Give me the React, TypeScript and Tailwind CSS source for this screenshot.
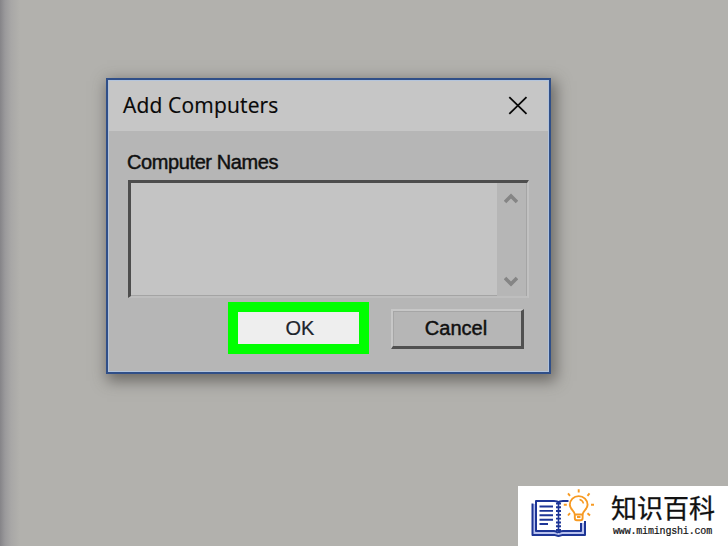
import type { ReactNode } from 'react';

const Chevron = ({ down = false }: { down?: boolean }) => (
  <svg viewBox="0 0 14 11" width="14" height="11" fill="none" stroke="#858585" strokeWidth={3.6}>
    <path d={down ? 'M1 2l6 6 6-6' : 'M1 9l6-6 6 6'} />
  </svg>
);

const CloseIcon = () => (
  <svg viewBox="0 0 20 20" width="20" height="20" fill="none" stroke="#080808" strokeWidth={1.8}>
    <path d="M1.3 1.2l17.2 16.6M18.5 1.2L1.3 17.8" />
  </svg>
);

const BookLogo = () => (
  <svg viewBox="0 0 66 52" width="66" height="52" fill="none" strokeLinejoin="round">
    <path d="M2.500 15H6v27h18l4.500 1.500L33 42h18v-8h4v12H2.500z" fill="#b9c2ee" />
    <g stroke="#1d3596" strokeWidth={2}>
      <path d="M28 44c-1-1.500-2-2-4-2H6V12h18c2.500 0 4 .7 4.500 1.500 .5-.8 2-1.500 4.500-1.500h5.500" />
      <path d="M2.500 14.500V46h22c1.500 0 2 1 4 1s2.500-1 4-1H55V32" />
      <path d="M29 44c.5-1.500 2-2 4-2h18v-8" />
      <path d="M28.500 13v31" strokeWidth={1.6} />
      <path d="M28.500 13.500v29" strokeWidth={5} strokeDasharray="1.900 1.900" />
      <path d="M9.500 17.500h13.500M9.500 21.900h13.500M9.500 26.300h13.500M9.500 30.700h13.500M9.500 35h8.500" strokeWidth={1.9} />
    </g>
    <g stroke="#f79a22" strokeWidth={1.9}>
      <path d="M44.800 25.500c0-3.500-5-5-5-9.700a8.900 8.700 0 0 1 17.800 0c0 4.700-5 6.200-5 9.700z" />
      <path d="M44.800 25.500V29c0 1.500 1 2.300 2 2.300h3.800c1 0 2-.8 2-2.300v-3.500M47 28h3.500" />
      <path d="M49.500 10.500c2 .4 3.500 1.800 4 4" strokeWidth={1.3} />
      <path d="M48.700 .2v3.300M38 4.300l2 2.500M59.500 4.300l-2 2.500M33.800 15.800h3M61 15.800h3M38 26.500l2-2.300M60 26.500l-2.500-2.300" />
    </g>
  </svg>
);

const ScrollBar = () => (
  <div className="flex w-[30px] flex-col items-center justify-between border-r border-[#a5a5a5] bg-[#b6b6b6] pt-[10px] pr-px pb-[9px]">
    <Chevron />
    <Chevron down />
  </div>
);

const Label = ({ className, children }: { className: string; children: ReactNode }) => (
  <span className={`block whitespace-nowrap font-['Liberation_Sans',sans-serif] text-[20px] leading-6 ${className}`}>
    {children}
  </span>
);

const Watermark = () => (
  <div className="flex h-[60px] w-[210px] bg-white pt-[3px] pl-[12px]">
    <BookLogo />
    <div className="ml-[15px] whitespace-nowrap text-[#111]">
      <div className="mt-[4px] font-['Noto_Sans_CJK_SC',sans-serif] text-[26px] leading-[27px] [-webkit-text-stroke:0.3px_#111]">
        知识百科
      </div>
      <div className="mt-[5px] ml-[2px] font-['Liberation_Mono',monospace] text-[10px] leading-[14px] tracking-[-0.18px] [-webkit-text-stroke:0.2px_#111]">
        www.mimingshi.com
      </div>
    </div>
  </div>
);

export default function App() {
  return (
    <main className="flex h-[546px] w-[728px] flex-col overflow-hidden bg-[#b2b1ad] bg-[linear-gradient(90deg,#858488_0px,#9a999b_5px,#a8a7a6_11px,#b2b1ad_20px)] pt-[78px]">
      <section className="ml-[106px] flex h-[296px] w-[445px] shrink-0 flex-col border-2 border-[#304f88] bg-[#b6b6b6] shadow-[3px_5px_14px_2px_rgba(70,68,65,0.65),inset_0_0_0_1px_#b3c4dc]">
        <header className="mx-px mt-px flex h-[50px] shrink-0 items-center justify-between bg-[#c6c6c6] pr-[20px] pl-[14px]">
          <span className="whitespace-nowrap pb-[2px] font-['Open_Sans',sans-serif] text-[21px] leading-7 tracking-[0.17px] text-[#080808] [-webkit-text-stroke:0.2px_#080808]">
            Add Computers
          </span>
          <CloseIcon />
        </header>
        <div className="px-[20px] pt-[19px]">
          <Label className="-ml-px tracking-[-0.4px] text-[#101010] [-webkit-text-stroke:0.45px_#101010]">
            Computer Names
          </Label>
          <div className="mt-[6px] flex h-[118px] w-[401px] border-t-[3px] border-r-2 border-b-2 border-l-[3px] border-t-[#4d4d4d] border-r-[#c1c1c1] border-b-[#bebebe] border-l-[#4d4d4d] bg-[#c4c4c4]">
            <div className="flex-1 border-b border-[#a4a4a4]" />
            <ScrollBar />
          </div>
          <div className="mt-[4px] ml-[100px] flex items-start">
            <button className="flex h-[52px] w-[141px] items-center justify-center border-[10px] border-[#00ff00] bg-[#eeeeee] pl-[3px]">
              <Label className="text-[#20232b] [-webkit-text-stroke:0.2px_#20232b]">OK</Label>
            </button>
            <button className="mt-[7px] ml-[22px] flex h-[40px] w-[133px] items-center justify-center border-t-2 border-r-[3px] border-b-[3px] border-l-2 border-t-[#c7c7c7] border-r-[#505050] border-b-[#505050] border-l-[#c7c7c7] bg-[#b6b6b6] pr-[2px] pb-[2px] shadow-[inset_1px_1px_#a6a6a6]">
              <Label className="text-[#101010] [-webkit-text-stroke:0.45px_#101010]">Cancel</Label>
            </button>
          </div>
        </div>
      </section>
      <footer className="mt-auto flex justify-end">
        <Watermark />
      </footer>
    </main>
  );
}
